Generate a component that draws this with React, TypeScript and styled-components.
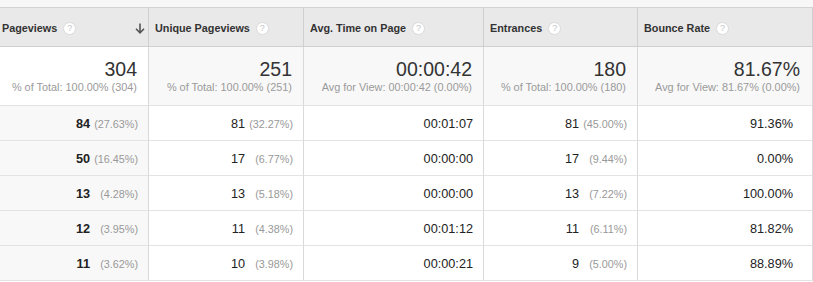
import React from "react";
import styled, { createGlobalStyle } from "styled-components";

const GlobalStyle = createGlobalStyle`
  body {
    margin: 0;
    background: #ffffff;
    font-family: "Liberation Sans", Arial, sans-serif;
  }
`;

interface Column {
  title: string;
  total: string;
  totalNote: string;
  sorted?: boolean;
}

interface Cell {
  value: string;
  share?: string;
}

const columns: Column[] = [
  { title: "Pageviews", total: "304", totalNote: "% of Total: 100.00% (304)", sorted: true },
  { title: "Unique Pageviews", total: "251", totalNote: "% of Total: 100.00% (251)" },
  { title: "Avg. Time on Page", total: "00:00:42", totalNote: "Avg for View: 00:00:42 (0.00%)" },
  { title: "Entrances", total: "180", totalNote: "% of Total: 100.00% (180)" },
  { title: "Bounce Rate", total: "81.67%", totalNote: "Avg for View: 81.67% (0.00%)" }
];

const rows: Cell[][] = [
  [
    { value: "84", share: "(27.63%)" },
    { value: "81", share: "(32.27%)" },
    { value: "00:01:07" },
    { value: "81", share: "(45.00%)" },
    { value: "91.36%" }
  ],
  [
    { value: "50", share: "(16.45%)" },
    { value: "17", share: "(6.77%)" },
    { value: "00:00:00" },
    { value: "17", share: "(9.44%)" },
    { value: "0.00%" }
  ],
  [
    { value: "13", share: "(4.28%)" },
    { value: "13", share: "(5.18%)" },
    { value: "00:00:00" },
    { value: "13", share: "(7.22%)" },
    { value: "100.00%" }
  ],
  [
    { value: "12", share: "(3.95%)" },
    { value: "11", share: "(4.38%)" },
    { value: "00:01:12" },
    { value: "11", share: "(6.11%)" },
    { value: "81.82%" }
  ],
  [
    { value: "11", share: "(3.62%)" },
    { value: "10", share: "(3.98%)" },
    { value: "00:00:21" },
    { value: "9", share: "(5.00%)" },
    { value: "88.89%" }
  ]
];

const SortArrow = () => (
  <svg width="10" height="11" viewBox="0 0 10 11">
    <path
      d="M5 0.5 V9.5 M1 5.8 L5 9.8 L9 5.8"
      fill="none"
      stroke="#555"
      strokeWidth="1.6"
    />
  </svg>
);

const App = () => {
  return (
    <>
      <GlobalStyle />
      <Table>
        <TopStrip />
        {columns.map((col, i) => (
          <HeaderCell key={col.title} $first={i === 0}>
            <HeaderLabel>
              {col.title}
              <HelpIcon>?</HelpIcon>
            </HeaderLabel>
            {col.sorted && <SortArrow />}
          </HeaderCell>
        ))}
        {columns.map((col, i) => (
          <TotalCell key={col.title} $plain={!!col.sorted} $last={i === columns.length - 1}>
            <TotalValue>{col.total}</TotalValue>
            <TotalNote>{col.totalNote}</TotalNote>
          </TotalCell>
        ))}
        {rows.map((row, r) =>
          row.map((cell, c) => (
            <BodyCell
              key={`${r}-${c}`}
              $sorted={!!columns[c].sorted}
              $last={c === row.length - 1}
            >
              <CellValue $bold={!!columns[c].sorted}>{cell.value}</CellValue>
              {cell.share && <Share>{cell.share}</Share>}
            </BodyCell>
          ))
        )}
      </Table>
    </>
  );
};

export default App;

const Table = styled.div`
  display: grid;
  grid-template-columns: 149px 155px 180px 154px 175px;
  width: 813px;
  color: #222;
`;

const TopStrip = styled.div`
  grid-column: 1 / -1;
  height: 8px;
  box-sizing: border-box;
  background: #f7f7f7;
  border-bottom: 1px solid #d3d3d3;
`;

const HeaderCell = styled.div<{ $first: boolean }>`
  box-sizing: border-box;
  height: 39px;
  display: flex;
  align-items: center;
  justify-content: space-between;
  padding: 2px 3px 0 ${({ $first }) => ($first ? "2px" : "6px")};
  background: #e9e9e9;
  border-right: 1px solid #d0d0d0;
  border-bottom: 1px solid #d0d0d0;
`;

const HeaderLabel = styled.span`
  display: flex;
  align-items: center;
  font-size: 10.8px;
  font-weight: bold;
  color: #333;
  white-space: nowrap;
`;

const HelpIcon = styled.span`
  display: inline-flex;
  align-items: center;
  justify-content: center;
  box-sizing: border-box;
  width: 13px;
  height: 13px;
  margin-left: 6px;
  border: 1px solid #dadada;
  border-radius: 50%;
  background: #ffffff;
  color: #c4c4c4;
  font-size: 9px;
  font-weight: normal;
`;

const TotalCell = styled.div<{ $plain: boolean; $last: boolean }>`
  box-sizing: border-box;
  height: 59px;
  display: flex;
  flex-direction: column;
  align-items: flex-end;
  padding: 11px ${({ $last }) => ($last ? "12px" : "11px")} 0 0;
  background: ${({ $plain }) => ($plain ? "#ffffff" : "#f8f8f8")};
  border-right: 1px solid #d9d9d9;
  border-bottom: 1px solid #e3e3e3;
`;

const TotalValue = styled.div`
  font-size: 19.5px;
  line-height: 22px;
  color: #333;
`;

const TotalNote = styled.div`
  margin-top: 1px;
  font-size: 10.9px;
  line-height: 13px;
  color: #9a9a9a;
  white-space: nowrap;
`;

const BodyCell = styled.div<{ $sorted: boolean; $last: boolean }>`
  box-sizing: border-box;
  height: 35px;
  display: flex;
  align-items: center;
  justify-content: flex-end;
  padding: 1px ${({ $last }) => ($last ? "19px" : "10px")} 0 0;
  background: ${({ $sorted }) => ($sorted ? "#f8f8f8" : "#ffffff")};
  border-right: 1px solid #d9d9d9;
  border-bottom: 1px solid #e3e3e3;
`;

const CellValue = styled.span<{ $bold: boolean }>`
  font-size: 12.7px;
  font-weight: ${({ $bold }) => ($bold ? "bold" : "normal")};
  color: #222;
`;

const Share = styled.span`
  width: 48px;
  text-align: right;
  font-size: 10.8px;
  color: #999;
`;
